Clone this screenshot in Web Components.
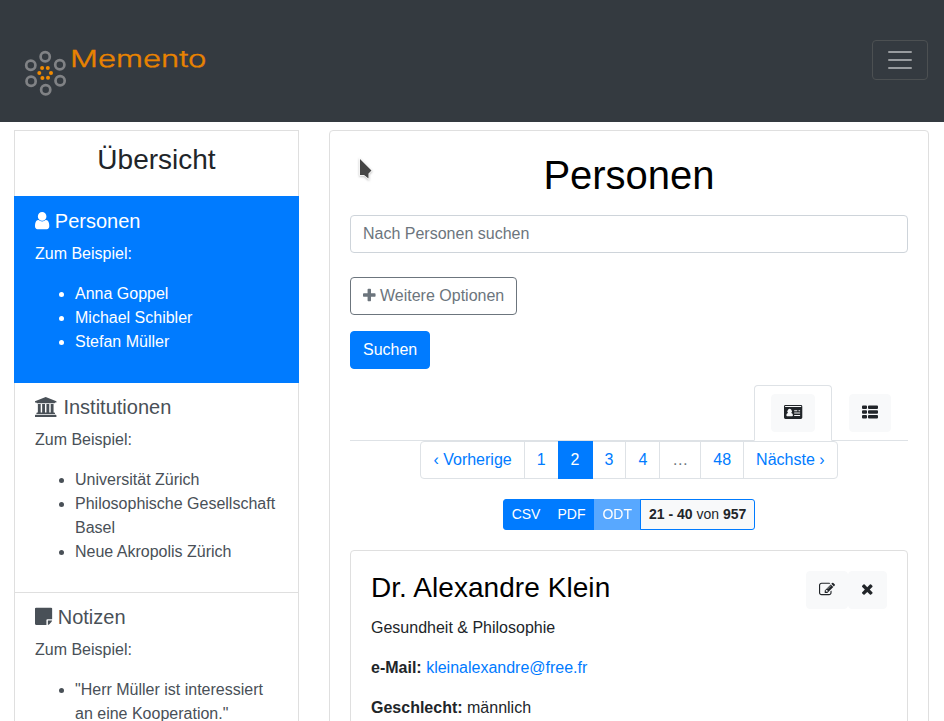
<!DOCTYPE html>
<html lang="de">
<head>
<meta charset="utf-8">
<title>Memento</title>
<style>
html,body{margin:0;height:721px;overflow:hidden;background:#fff}
body{font:16px/1.5 "Liberation Sans",Arial,sans-serif;color:#212529}
main{display:grid;grid-template-columns:285px 600px;column-gap:30px;padding:8px 0 0 14px;align-items:start;height:599px;box-sizing:border-box;overflow:hidden}
</style>
</head>
<body>
<mm-navbar></mm-navbar>
<main>
<mm-list heading="Übersicht">
<mm-entry active icon="user" heading="Personen"><li>Anna Goppel</li><li>Michael Schibler</li><li>Stefan Müller</li></mm-entry>
<mm-entry icon="university" heading="Institutionen"><li>Universität Zürich</li><li>Philosophische Gesellschaft Basel</li><li>Neue Akropolis Zürich</li></mm-entry>
<mm-entry icon="note" heading="Notizen"><li>"Herr Müller ist interessiert an eine Kooperation."</li></mm-entry>
</mm-list>
<mm-search></mm-search>
</main>
<mm-cursor></mm-cursor>
<script>
const icons={
user:[256,-60,1280,1792,'<path d="M1536 1399q0 109-62.500 187t-150.500 78h-854q-88 0-150.500-78t-62.500-187q0-85 8.500-160.500t31.500-152 58.500-131 94-89 134.500-34.500q131 128 313 128t313-128q76 0 134.500 34.500t94 89 58.500 131 31.500 152 8.500 160.500zm-256-887q0 159-112.500 271.500t-271.500 112.500-271.500-112.500-112.500-271.500 112.500-271.500 271.500-112.500 271.500 112.500 112.500 271.500z"/>'],
university:[0,-80,2048,1792,'<path d="M960 0l960 384v128h-128q0 26-20.500 45t-48.500 19h-1526q-28 0-48.500-19t-20.500-45h-128v-128zm-704 640h256v768h128v-768h256v768h128v-768h256v768h128v-768h256v768h59q28 0 48.500 19t20.500 45v64h-1664v-64q0-26 20.500-45t48.500-19h59v-768zm1595 960q28 0 48.500 19t20.500 45v128h-1920v-128q0-26 20.500-45t48.500-19h1782z"/>'],
note:[0,-30,1536,1792,'<path d="M1024 1248v416h-928q-40 0-68-28t-28-68v-1344q0-40 28-68t68-28h1344q40 0 68 28t28 68v928h-416q-40 0-68 28t-28 68zm128 32h381q-15 82-65 132l-184 184q-50 50-132 65z"/>'],
plus:[192,-70,1408,1792,'<path d="M1600 736v192q0 40-28 68t-68 28h-416v416q0 40-28 68t-68 28h-192q-40 0-68-28t-28-68v-416h-416q-40 0-68-28t-28-68v-192q0-40 28-68t68-28h416v-416q0-40 28-68t68-28h192q40 0 68 28t28 68v416h416q40 0 68 28t28 68z"/>'],
times:[192,0,1408,1792,'<path d="M1490 1322q0 40-28 68l-136 136q-28 28-68 28t-68-28l-294-294-294 294q-28 28-68 28t-68-28l-136-136q-28-28-28-68t28-68l294-294-294-294q-28-28-28-68t28-68l136-136q28-28 68-28t68 28l294 294 294-294q28-28 68-28t68 28l136 136q28 28 28 68t-28 68l-294 294 294 294q28 28 28 68z"/>'],
edit:[0,-60,1792,1792,'<path d="M888 1184l116-116-152-152-116 116v56h96v96h56zm440-720q-16-16-33 1l-350 350q-17 17-1 33t33-1l350-350q17-17 1-33zm80 594v190q0 119-84.500 203.500t-203.500 84.500h-832q-119 0-203.500-84.500t-84.500-203.500v-832q0-119 84.500-203.500t203.500-84.500h832q63 0 117 25 15 7 18 23 3 17-9 29l-49 49q-14 14-32 8-23-6-45-6h-832q-66 0-113 47t-47 113v832q0 66 47 113t113 47h832q66 0 113-47t47-113v-126q0-13 9-22l64-64q15-15 35-7t20 29zm-96-738l288 288-672 672h-288v-288zm444 132l-92 92-288-288 92-92q28-28 68-28t68 28l152 152q28 28 28 68t-28 68z"/>'],
list:[0,0,16,16,'<path d="M1 1.500h3a1 1 0 0 1 1 1v1.500a1 1 0 0 1-1 1H1a1 1 0 0 1-1-1V2.500a1 1 0 0 1 1-1zm6 0h8a1 1 0 0 1 1 1v1.500a1 1 0 0 1-1 1H7a1 1 0 0 1-1-1V2.500a1 1 0 0 1 1-1zM1 6.200h3a1 1 0 0 1 1 1v1.600a1 1 0 0 1-1 1H1a1 1 0 0 1-1-1V7.200a1 1 0 0 1 1-1zm6 0h8a1 1 0 0 1 1 1v1.600a1 1 0 0 1-1 1H7a1 1 0 0 1-1-1V7.200a1 1 0 0 1 1-1zM1 11h3a1 1 0 0 1 1 1v1.500a1 1 0 0 1-1 1H1a1 1 0 0 1-1-1V12a1 1 0 0 1 1-1zm6 0h8a1 1 0 0 1 1 1v1.500a1 1 0 0 1-1 1H7a1 1 0 0 1-1-1V12a1 1 0 0 1 1-1z"/>'],
card:[0,0,18.286,16,'<path fill-rule="evenodd" d="M1.400 1h15.500a1.400 1.400 0 0 1 1.400 1.400v11.200a1.400 1.400 0 0 1-1.400 1.400H1.400A1.400 1.400 0 0 1 0 13.600V2.400A1.400 1.400 0 0 1 1.400 1zM1.100 2.100v.9h16.100v-.9zM4.100 9C3 9.200 2.400 10 2.400 11.200c0 .6.300 1 .8 1h4.900c.5 0 .8-.4.800-1C8.900 10 8.300 9.200 7.200 9a2.300 2.300 0 1 0-3.100 0zM10.200 6.300v1h3.100v-1zm4.300 0v1h1.600v-1zm-4.300 2.300v1h5.900v-1zm0 2.300v1h5.900v-1z"/>']
};
function define(name,render){
  customElements.define(name,class extends HTMLElement{
    connectedCallback(){
      if(this.shadowRoot)return;
      this.attachShadow({mode:'open'}).innerHTML='<style>*{box-sizing:border-box}:host{display:block;box-sizing:border-box}</style>'+render(this);
    }
  });
}
define('mm-icon',e=>{
  const [x,y,w,h,p]=icons[e.getAttribute('name')];
  return `<style>:host{display:inline-block;height:1em;width:${w/h}em;line-height:1;vertical-align:-.143em}svg{display:block;width:100%;height:100%;fill:currentColor;overflow:visible}</style><svg viewBox="${x} ${y} ${w} ${h}">${p}</svg>`;
});
define('mm-logo',()=>`<style>:host{width:190px;height:50px}svg{display:block;overflow:visible}text{font:300 22.500px Inter,sans-serif;fill:#e98300;stroke:#e98300;stroke-width:.4px}</style>
<svg width="190" height="50" viewBox="20 48 190 50"><g fill="none" stroke="#808285" stroke-width="2.700"><circle cx="45.200" cy="56.700" r="4.600"/><circle cx="30.800" cy="65.300" r="4.600"/><circle cx="59.800" cy="64.800" r="4.600"/><circle cx="31.100" cy="81.200" r="4.600"/><circle cx="60.100" cy="80.800" r="4.600"/><circle cx="45.700" cy="89.800" r="4.600"/></g><g fill="#f08a00"><circle cx="42.100" cy="68" r="2"/><circle cx="47.800" cy="68" r="2"/><circle cx="39.300" cy="73" r="2"/><circle cx="51" cy="73" r="2"/><circle cx="42.400" cy="77.900" r="2"/><circle cx="48" cy="77.700" r="2"/></g><text x="70" y="67" textLength="136.500" lengthAdjust="spacingAndGlyphs">Memento</text></svg>`);
define('mm-navbar',()=>`<style>:host{display:flex;justify-content:space-between;align-items:flex-start;height:122px;background:#343a40;padding:40px 16px 0 20px}mm-logo{margin-top:8px}button{width:56px;height:40px;border:1px solid #4c5052;border-radius:4px;background:none;padding:0;display:grid;place-items:center}svg{display:block}</style>
<mm-logo></mm-logo><button aria-label="Menü"><svg width="30" height="30" viewBox="0 0 30 30"><path stroke="#999c9f" stroke-width="2" stroke-linecap="round" d="M4 7h22M4 15h22M4 23h22"/></svg></button>`);
define('mm-list',e=>`<style>header{height:66.600px;border:1px solid #dfdfdf;padding:12px 20px}h3{font-size:28px;line-height:1.200;margin:0;text-align:center;font-weight:400}</style><header><h3>${e.getAttribute('heading')}</h3></header><slot></slot>`);
define('mm-entry',e=>`<style>:host{position:relative;margin-top:-1px;border:1px solid #dfdfdf;background:#fff;color:#495057;padding:12px 20px}:host([active]){z-index:2;background:#007bff;border-color:#007bff;color:#fff}h5{font-size:20px;line-height:24px;height:25px;font-weight:400;margin:0 0 8px}p{margin:0 0 16px}ul{margin:0 0 16px;padding-left:40px}</style>
<h5><mm-icon name="${e.getAttribute('icon')}"></mm-icon> ${e.getAttribute('heading')}</h5><p>Zum Beispiel:</p><ul><slot></slot></ul>`);
define('mm-button',()=>`<style>:host{display:inline-block;border:1px solid #007bff;background:#007bff;color:#fff;border-radius:4px;padding:6px 12px;height:38px;line-height:24px;white-space:nowrap}:host([kind=outline]){background:#fff;color:#6c757d;border-color:#6c757d}:host([kind=light]){background:#f8f9fa;border-color:#f8f9fa;color:#212529}</style><slot></slot>`);
define('mm-tabs',()=>`<style>:host{display:flex;justify-content:flex-end;height:56px;border-bottom:1px solid #dee2e6}div{border:1px solid transparent;padding:8px 16px;height:56px}.on{border-color:#dee2e6 #dee2e6 #fff;background:#fff;border-radius:4px 4px 0 0}</style><div class="on"><mm-button kind="light"><mm-icon name="card"></mm-icon></mm-button></div><div><mm-button kind="light"><mm-icon name="list"></mm-icon></mm-button></div>`);
define('mm-pager',()=>`<style>:host{display:flex;justify-content:center;line-height:20px;color:#007bff}span{border:1px solid #dee2e6;padding:8px 12px;height:38px;margin-left:-1px}span:first-of-type{margin-left:0;border-radius:4px 0 0 4px}span:last-of-type{border-radius:0 4px 4px 0}.on{background:#007bff;color:#fff;border-color:#007bff;position:relative}.off{color:#6c757d}</style><span>‹ Vorherige</span><span>1</span><span class="on">2</span><span>3</span><span>4</span><span class="off">…</span><span>48</span><span>Nächste ›</span>`);
define('mm-export',()=>`<style>:host{display:flex;justify-content:center;font-size:14px;line-height:21px;margin-top:20px}span{border:1px solid #007bff;background:#007bff;color:#fff;padding:4px 8px;height:31px;margin-left:-1px}span:first-of-type{margin-left:0;border-radius:3px 0 0 3px}.off{opacity:.65}.info{background:#f8f9fa;color:#212529;border-radius:0 3px 3px 0}</style><span>CSV</span><span>PDF</span><span class="off">ODT</span><span class="info"><b>21 - 40</b> von <b>957</b></span>`);
define('mm-person',()=>`<style>:host{border:1px solid #dfdfdf;border-radius:4px;padding:20px;margin-top:20px;height:400px}.top{display:flex;justify-content:space-between;height:45px}h3{font-size:28px;line-height:33.600px;font-weight:400;color:#000;margin:0;letter-spacing:.06px}.act{display:flex}p{margin:0 0 16px}a{color:#007bff}</style><div class="top"><h3>Dr. Alexandre Klein</h3><div class="act"><mm-button kind="light"><mm-icon name="edit"></mm-icon></mm-button><mm-button kind="light"><mm-icon name="times"></mm-icon></mm-button></div></div><p>Gesundheit &amp; Philosophie</p><p><b>e-Mail:</b> <a>kleinalexandre@free.fr</a></p><p><b>Geschlecht:</b> männlich</p>`);
define('mm-search',()=>`<style>:host{border:1px solid #dfdfdf;border-radius:4px;padding:20px;height:700px}h1{font-size:40px;line-height:48px;font-weight:400;color:#000;text-align:center;margin:0 0 16px}.field{border:1px solid #ced4da;border-radius:4px;height:38px;padding:6px 12px;color:#6c757d;margin-bottom:24px}.row{display:flex;margin-bottom:16px}</style><h1>Personen</h1><div class="field">Nach Personen suchen</div><div class="row"><mm-button kind="outline"><mm-icon name="plus"></mm-icon> Weitere Optionen</mm-button></div><div class="row"><mm-button>Suchen</mm-button></div><mm-tabs></mm-tabs><mm-pager></mm-pager><mm-export></mm-export><mm-person></mm-person>`);
define('mm-cursor',()=>`<style>:host{position:absolute;left:356px;top:156px;z-index:9}svg{display:block;overflow:visible;filter:drop-shadow(0 1px 1px #0004)}</style><svg width="18" height="26"><path d="M4 3L15.500 14.500 12.500 17.500V22.500L8 19H4Z" fill="#454545" stroke="#fff" stroke-width="1.400" paint-order="stroke"/></svg>`);
</script>
</body>
</html>
